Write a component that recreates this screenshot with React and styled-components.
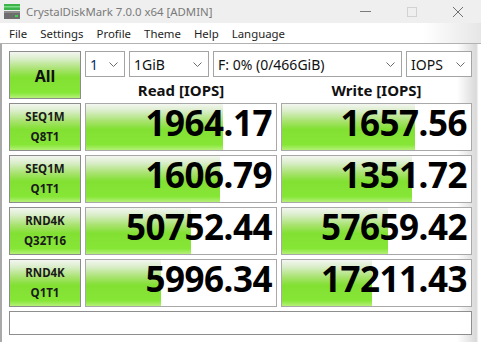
import styled, { createGlobalStyle } from "styled-components";

const GlobalStyle = createGlobalStyle`
  html, body {
    margin: 0;
    padding: 0;
    background: #ffffff;
  }
  body {
    font-family: "Noto Sans", "Open Sans", sans-serif;
  }
`;

const MENU = ["File", "Settings", "Profile", "Theme", "Help", "Language"];

const SELECTS = [
  { label: "1", width: 40, focus: true },
  { label: "1GiB", width: 80 },
  { label: "F: 0% (0/466GiB)", width: 189 },
  { label: "IOPS", width: 66 },
];

const RESULTS = [
  { name: "SEQ1M", sub: "Q8T1", read: "1964.17", readBar: 72, write: "1657.56", writeBar: 70.5 },
  { name: "SEQ1M", sub: "Q1T1", read: "1606.79", readBar: 70.5, write: "1351.72", writeBar: 69 },
  { name: "RND4K", sub: "Q32T16", read: "50752.44", readBar: 55, write: "57659.42", writeBar: 56 },
  { name: "RND4K", sub: "Q1T1", read: "5996.34", readBar: 39.5, write: "17211.43", writeBar: 47.5 },
];

function AppIcon() {
  return (
    <svg width="16" height="15" viewBox="0 0 16 15">
      <rect x="0" y="0" width="16" height="6" fill="#3bb54a" />
      <rect x="0" y="2" width="16" height="1.5" fill="#7fd98a" />
      <rect x="0" y="7" width="16" height="8" fill="#6e6e6e" />
      <rect x="0" y="7" width="16" height="2" fill="#8d8d8d" />
      <rect x="11" y="11" width="3" height="2" fill="#42d14f" />
    </svg>
  );
}

function Chevron() {
  return (
    <svg width="9" height="5" viewBox="0 0 9 5">
      <polyline points="0.5,0.5 4.5,4.5 8.5,0.5" fill="none" stroke="#6c6c6c" strokeWidth="1" />
    </svg>
  );
}

function WindowControls() {
  return (
    <Controls>
      <svg width="12" height="12" viewBox="0 0 12 12">
        <line x1="0" y1="5.5" x2="11" y2="5.5" stroke="#7a7a7a" strokeWidth="1" />
      </svg>
      <svg width="12" height="12" viewBox="0 0 12 12">
        <rect x="1.5" y="1.5" width="9" height="9" fill="none" stroke="#d2d2d2" strokeWidth="1" />
      </svg>
      <svg width="12" height="12" viewBox="0 0 12 12">
        <line x1="1" y1="1" x2="11" y2="11" stroke="#707070" strokeWidth="1" />
        <line x1="11" y1="1" x2="1" y2="11" stroke="#707070" strokeWidth="1" />
      </svg>
    </Controls>
  );
}

export default function App() {
  return (
    <>
      <GlobalStyle />
      <Window>
        <TitleBar>
          <AppIcon />
          <Title>CrystalDiskMark 7.0.0 x64 [ADMIN]</Title>
          <WindowControls />
        </TitleBar>
        <MenuBar>
          {MENU.map((item) => (
            <MenuItem key={item}>{item}</MenuItem>
          ))}
        </MenuBar>
        <Body>
          <AllButton>All</AllButton>
          <SelectRow>
            {SELECTS.map((s) => (
              <Select key={s.label} $width={s.width}>
                <SelectText $focus={s.focus}>{s.label}</SelectText>
                <Chevron />
              </Select>
            ))}
          </SelectRow>
          <Header>Read [IOPS]</Header>
          <Header>Write [IOPS]</Header>
          {RESULTS.map((r) => (
            <Row key={r.name + r.sub}>
              <TestButton>
                <span>{r.name}</span>
                <span>{r.sub}</span>
              </TestButton>
              <ResultCell>
                <Bar style={{ width: `${r.readBar}%` }} />
                <Value>{r.read}</Value>
              </ResultCell>
              <ResultCell>
                <Bar style={{ width: `${r.writeBar}%` }} />
                <Value>{r.write}</Value>
              </ResultCell>
            </Row>
          ))}
          <MessageBar />
        </Body>
      </Window>
    </>
  );
}

const greenGradient = `linear-gradient(
  to bottom,
  #f3f6f0 0%,
  #dceecd 14%,
  #a6e26c 38%,
  #82e032 55%,
  #86e636 88%,
  #b4f078 100%
)`;

const Window = styled.div`
  position: relative;
  width: 481px;
  height: 342px;
  overflow: hidden;
  background: #ffffff;
  display: flex;
  flex-direction: column;
`;

const TitleBar = styled.div`
  height: 23px;
  flex-shrink: 0;
  display: flex;
  align-items: center;
  padding-left: 4px;
  background: #efefef;
`;

const Title = styled.span`
  margin-left: 6px;
  font-size: 11.4px;
  color: #7a7a7a;
  white-space: nowrap;
`;

const Controls = styled.div`
  margin-left: auto;
  display: flex;
  align-items: center;
  gap: 34px;
  padding-right: 17px;
  padding-top: 1px;
`;

const MenuBar = styled.div`
  height: 20px;
  flex-shrink: 0;
  display: flex;
  align-items: center;
  gap: 13px;
  padding-left: 9px;
  background: linear-gradient(to right, #ffffff 88%, #e6e6e6 100%);
  border-bottom: 1px solid #b2b2b2;
`;

const MenuItem = styled.span`
  font-size: 11.4px;
  color: #1e1e1e;
`;

const Body = styled.div`
  flex: 1;
  display: grid;
  grid-template-columns: 72px 192px 191px;
  grid-template-rows: 26px 18px repeat(4, 48px) 24px;
  column-gap: 4px;
  row-gap: 4px;
  align-content: start;
  padding: 7px 0 0 7px;
  border-left: 2px solid #a9a9a9;
  background: linear-gradient(to right, #ffffff 95%, #d9d9d9 99%, #ffffff 99.5%);
`;

const AllButton = styled.div`
  grid-row: 1 / span 2;
  grid-column: 1;
  box-sizing: border-box;
  display: flex;
  align-items: center;
  justify-content: center;
  border: 1px solid #8c8c8c;
  background: ${greenGradient};
  font-size: 16px;
  font-weight: 700;
  color: #111111;
  padding-top: 2px;
`;

const SelectRow = styled.div`
  grid-row: 1;
  grid-column: 2 / span 2;
  display: flex;
  gap: 4px;
`;

const Select = styled.div`
  box-sizing: border-box;
  width: ${(p) => p.$width}px;
  height: 26px;
  display: flex;
  align-items: center;
  justify-content: space-between;
  padding: 0 6px 0 4px;
  border: 1px solid #a4a4a4;
  background: #ffffff;
`;

const SelectText = styled.span`
  font-size: 14px;
  color: ${(p) => (p.$focus ? "#0b2a66" : "#111111")};
  white-space: nowrap;
`;

const Header = styled.div`
  grid-row: 2;
  display: flex;
  align-items: center;
  justify-content: center;
  font-size: 15px;
  font-weight: 700;
  color: #111111;
  line-height: 18px;
`;

const Row = styled.div`
  display: contents;
`;

const TestButton = styled.div`
  grid-column: 1;
  box-sizing: border-box;
  display: flex;
  flex-direction: column;
  align-items: center;
  justify-content: center;
  border: 1px solid #8c8c8c;
  background: ${greenGradient};
  font-size: 11.5px;
  font-weight: 700;
  line-height: 20px;
  color: #1a1a1a;

  span {
    display: block;
  }
`;

const ResultCell = styled.div`
  position: relative;
  box-sizing: border-box;
  border: 1px solid #a8a8a8;
  background: #ffffff;
  display: flex;
  justify-content: flex-end;
  align-items: center;
`;

const Bar = styled.div`
  position: absolute;
  left: 0;
  top: 0;
  bottom: 0;
  background: ${greenGradient};
`;

const Value = styled.span`
  position: relative;
  font-size: 35px;
  font-weight: 700;
  line-height: 46px;
  margin-top: -8px;
  letter-spacing: -0.5px;
  color: #000000;
  padding-right: 4px;
  white-space: nowrap;
`;

const MessageBar = styled.div`
  grid-column: 1 / -1;
  box-sizing: border-box;
  border: 1px solid #8e8e8e;
  background: #ffffff;
`;
